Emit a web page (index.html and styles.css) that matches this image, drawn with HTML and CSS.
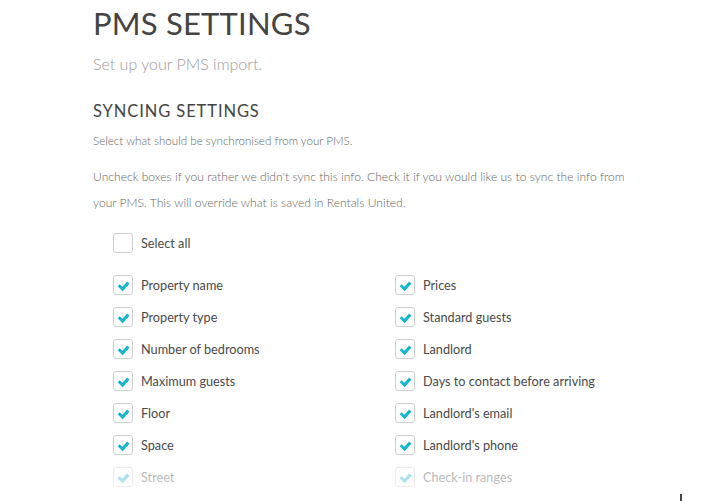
FILE: index.html
```html
<!DOCTYPE html>
<html lang="en">
<head>
    <meta charset="UTF-8">
    <meta name="viewport" content="width=device-width, initial-scale=1.0">
    <title>PMS Settings</title>
    <link rel="stylesheet" href="styles.css">
</head>
<body>
    <div class="page">
        <h1 class="title">PMS SETTINGS</h1>
        <p class="subtitle">Set up your PMS import.</p>

        <h2 class="section-title">SYNCING SETTINGS</h2>
        <p class="text">Select what should be synchronised from your PMS.</p>
        <p class="text text-long">Uncheck boxes if you rather we didn't sync this info. Check it if you would like us to sync the info from your PMS. This will override what is saved in Rentals United.</p>

        <div class="options">
            <label class="option select-all">
                <span class="box"></span>
                <span class="label">Select all</span>
            </label>

            <div class="option-grid">
                <label class="option"><span class="box checked"></span><span class="label">Property name</span></label>
                <label class="option"><span class="box checked"></span><span class="label">Prices</span></label>
                <label class="option"><span class="box checked"></span><span class="label">Property type</span></label>
                <label class="option"><span class="box checked"></span><span class="label">Standard guests</span></label>
                <label class="option"><span class="box checked"></span><span class="label">Number of bedrooms</span></label>
                <label class="option"><span class="box checked"></span><span class="label">Landlord</span></label>
                <label class="option"><span class="box checked"></span><span class="label">Maximum guests</span></label>
                <label class="option"><span class="box checked"></span><span class="label">Days to contact before arriving</span></label>
                <label class="option"><span class="box checked"></span><span class="label">Floor</span></label>
                <label class="option"><span class="box checked"></span><span class="label">Landlord's email</span></label>
                <label class="option"><span class="box checked"></span><span class="label">Space</span></label>
                <label class="option"><span class="box checked"></span><span class="label">Landlord's phone</span></label>
                <label class="option"><span class="box checked"></span><span class="label">Street</span></label>
                <label class="option"><span class="box checked"></span><span class="label">Check-in ranges</span></label>
            </div>
        </div>
    </div>
    <div class="fade"></div>
    <div class="cursor"></div>
</body>
</html>
```

FILE: styles.css
```css
body {
    margin: 0;
    padding: 0;
    background-color: #ffffff;
    font-family: Lato, "Liberation Sans", sans-serif;
    color: #555;
    overflow: hidden;
    height: 501px;
}
.page {
    padding: 3px 0 0 93px;
    width: 560px;
}
.title {
    margin: 0;
    font-size: 31px;
    font-weight: 400;
    line-height: 40px;
    color: #444;
    letter-spacing: 0.2px;
}
.subtitle {
    margin: 11px 0 0;
    font-size: 16px;
    font-weight: 300;
    line-height: 20px;
    color: #9a9a9a;
}
.section-title {
    margin: 27px 0 0;
    font-size: 16.5px;
    font-weight: 400;
    line-height: 20px;
    color: #444;
    letter-spacing: 0.9px;
}
.text {
    margin: 10px 0 0;
    font-size: 11.6px;
    font-weight: 300;
    line-height: 20px;
    color: #666;
}
.text-long {
    margin-top: 13px;
    font-size: 12.1px;
    line-height: 26px;
    width: 545px;
}
.options {
    margin-top: 11px;
    padding-left: 20px;
}
.option {
    display: flex;
    align-items: center;
    height: 32px;
    gap: 8px;
}
.select-all {
    margin-bottom: 10px;
}
.option-grid {
    display: grid;
    grid-template-columns: 282px 1fr;
}
.box {
    width: 18px;
    height: 18px;
    border: 1px solid #cfcfcf;
    border-radius: 3px;
    box-sizing: content-box;
    position: relative;
    flex-shrink: 0;
}
.box.checked::after {
    content: "";
    position: absolute;
    left: 6px;
    top: 4px;
    width: 4px;
    height: 7px;
    border: solid #18b4d4;
    border-width: 0 3px 3px 0;
    transform: rotate(42deg);
}
.label {
    font-size: 12.7px;
    color: #4a4a4a;
}
.fade {
    position: absolute;
    left: 0;
    right: 0;
    top: 466px;
    height: 35px;
    background: linear-gradient(to bottom, rgba(255,255,255,0.55), rgba(255,255,255,0.65) 50%, #fff 100%);
}
.cursor {
    position: absolute;
    left: 680px;
    top: 494px;
    width: 2px;
    height: 7px;
    background-color: #444;
}
```
